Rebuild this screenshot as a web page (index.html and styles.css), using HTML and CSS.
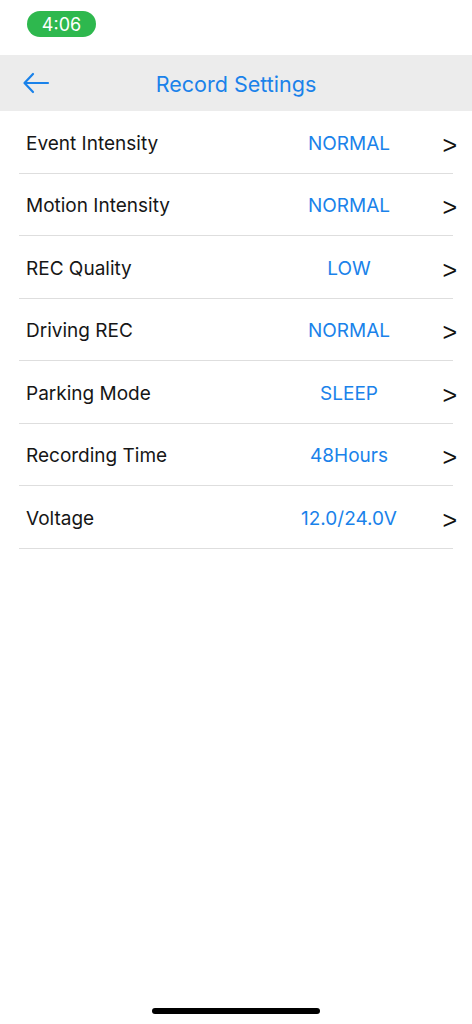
FILE: index.html
```html
<!DOCTYPE html>
<html lang="en">
<head>
<meta charset="utf-8">
<title>Record Settings</title>
<link rel="stylesheet" href="styles.css">
</head>
<body>
<div class="screen">
  <div class="status-bar">
    <span class="time-pill">4:06</span>
  </div>
  <header class="nav">
    <svg class="back" width="28" height="22" viewBox="0 0 28 22" fill="none" stroke="#1a82ea" stroke-width="2.2" stroke-linecap="round" stroke-linejoin="round">
      <path d="M26 11 H3"/>
      <path d="M11 2 L2.5 11 L11 20"/>
    </svg>
    <h1 class="title">Record Settings</h1>
  </header>
  <ul class="list">
    <li class="row"><span class="label">Event Intensity</span><span class="value">NORMAL</span><span class="chev">&gt;</span></li>
    <li class="row"><span class="label">Motion Intensity</span><span class="value">NORMAL</span><span class="chev">&gt;</span></li>
    <li class="row"><span class="label">REC Quality</span><span class="value">LOW</span><span class="chev">&gt;</span></li>
    <li class="row"><span class="label">Driving REC</span><span class="value">NORMAL</span><span class="chev">&gt;</span></li>
    <li class="row"><span class="label">Parking Mode</span><span class="value">SLEEP</span><span class="chev">&gt;</span></li>
    <li class="row"><span class="label">Recording Time</span><span class="value">48Hours</span><span class="chev">&gt;</span></li>
    <li class="row"><span class="label">Voltage</span><span class="value">12.0/24.0V</span><span class="chev">&gt;</span></li>
  </ul>
  <div class="home-indicator"></div>
</div>
</body>
</html>
```

FILE: styles.css
```css
html, body {
  margin: 0;
  padding: 0;
  background: #ffffff;
}
body {
  font-family: Inter, "Liberation Sans", Arial, sans-serif;
}
.screen {
  position: relative;
  width: 472px;
  height: 1024px;
  background: #ffffff;
  overflow: hidden;
}
.status-bar {
  height: 55px;
  padding: 11px 0 0 27px;
  box-sizing: border-box;
}
.time-pill {
  display: inline-flex;
  align-items: center;
  justify-content: center;
  width: 69px;
  height: 26px;
  border-radius: 13px;
  background: #2eb84e;
  color: #ffffff;
  font-size: 18px;
}
.nav {
  position: relative;
  height: 56px;
  background: #ececec;
  display: flex;
  align-items: center;
  justify-content: center;
}
.back {
  position: absolute;
  left: 22px;
  top: 17px;
}
.title {
  margin: 2px 0 0;
  font-weight: normal;
  font-size: 21.5px;
  color: #1a82ea;
}
.list {
  list-style: none;
  margin: 0 19px;
  padding: 0;
}
.row {
  display: grid;
  grid-template-columns: 1fr 160px 24px;
  align-items: center;
  height: 58.5px;
  border-bottom: 1px solid #dedede;
  padding-left: 7px;
  padding-top: 3px;
}
.label {
  font-size: 19px;
  color: #161616;
}
.value {
  text-align: center;
  font-size: 19px;
  color: #1a82ea;
}
.chev {
  justify-self: end;
  margin-right: -4px;
  margin-top: 4px;
  font-family: "Liberation Sans", Arial, sans-serif;
  font-size: 25px;
  color: #111111;
}
.home-indicator {
  position: absolute;
  left: 152px;
  bottom: 10px;
  width: 168px;
  height: 6px;
  border-radius: 3px;
  background: #000000;
}
```
